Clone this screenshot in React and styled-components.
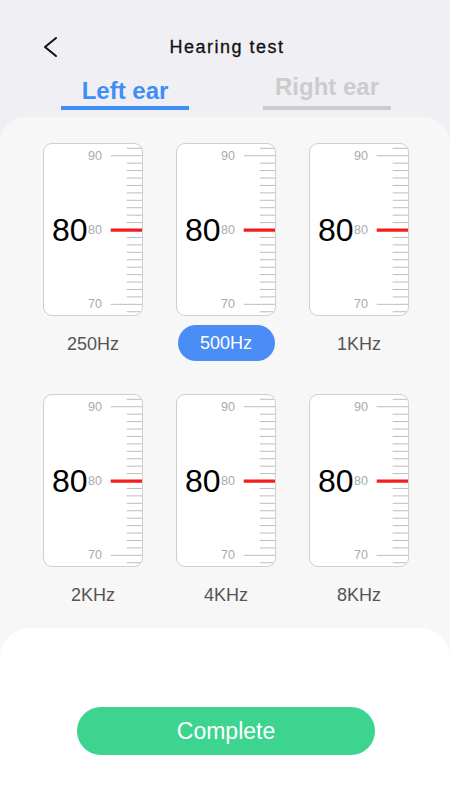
import React from "react";
import styled, { createGlobalStyle } from "styled-components";

const Global = createGlobalStyle`
  html, body { margin: 0; padding: 0; }
  body {
    font-family: "Liberation Sans", Arial, sans-serif;
    background: #f0eff4;
  }
  #root { min-height: 100vh; }
`;

const Page = styled.div`
  min-height: 100vh;
  display: flex;
  flex-direction: column;
  background: #f0eff4;
`;

const Header = styled.header`
  display: grid;
  grid-template-columns: 1fr auto 1fr;
  align-items: center;
  height: 38px;
  padding-top: 28px;
`;

const Back = styled.button`
  justify-self: start;
  margin-left: 42px;
  padding: 0;
  border: 0;
  background: none;
  display: flex;
  align-items: center;
  cursor: pointer;
`;

const Title = styled.h1`
  margin: 0;
  padding-left: 4px;
  font-size: 18px;
  line-height: 38px;
  font-weight: 400;
  letter-spacing: 1.5px;
  color: #111;
  -webkit-text-stroke: 0.3px #111;
`;

const Tabs = styled.nav`
  height: 44px;
  padding-bottom: 7px;
  display: flex;
  justify-content: center;
  align-items: flex-end;
  gap: 74px;
  padding-left: 2px;
`;

const Tab = styled.div`
  width: 128px;
  display: flex;
  flex-direction: column;
  align-items: center;
`;

const TabLabel = styled.span`
  font-size: 24px;
  line-height: 28px;
  font-weight: 700;
  color: ${(p) => (p.$active ? "#3f8ef7" : "#cccccc")};
`;

const TabLine = styled.span`
  display: block;
  width: 128px;
  height: 4px;
  margin-top: ${(p) => (p.$active ? "1px" : "5px")};
  background: ${(p) => (p.$active ? "#3f8ef7" : "#cccccc")};
`;

const Panel = styled.main`
  flex: 1;
  display: flex;
  flex-direction: column;
  background: #f7f7f7;
  border-radius: 26px 26px 0 0;
  padding-top: 26px;
`;

const Grid = styled.section`
  display: grid;
  grid-template-columns: repeat(3, 100px);
  column-gap: 33px;
  row-gap: 33px;
  justify-content: center;
  padding-left: 2px;
`;

const Cell = styled.div`
  display: flex;
  flex-direction: column;
  align-items: center;
`;

const Card = styled.div`
  position: relative;
  box-sizing: border-box;
  width: 100px;
  height: 173px;
  border: 1px solid #cfcfcf;
  border-radius: 9px;
  background: #fff;
  overflow: hidden;
  display: flex;
  align-items: center;
`;

const Scale = styled.svg`
  position: absolute;
  inset: 0;
  width: 100%;
  height: 100%;
`;

const Value = styled.span`
  position: relative;
  z-index: 1;
  padding-left: 8px;
  font-size: 32px;
  line-height: 1;
  color: #000;
`;

const Freq = styled.div`
  box-sizing: border-box;
  width: 97px;
  height: 36px;
  margin-top: 9px;
  padding-top: ${(p) => (p.$active ? "0" : "3px")};
  border-radius: 18px;
  display: flex;
  align-items: center;
  justify-content: center;
  font-size: 18px;
  background: ${(p) => (p.$active ? "#4a8df6" : "transparent")};
  color: ${(p) => (p.$active ? "#ffffff" : "#555555")};
`;

const Footer = styled.footer`
  flex: 1;
  margin-top: 16px;
  background: #ffffff;
  border-radius: 30px 30px 0 0;
  display: flex;
  justify-content: center;
  align-items: flex-start;
  padding-top: 79px;
  padding-left: 2px;
`;

const CompleteButton = styled.button`
  width: 298px;
  height: 48px;
  border: 0;
  border-radius: 24px;
  background: #3dd490;
  color: #fff;
  font-family: "Liberation Sans", Arial, sans-serif;
  font-size: 23px;
  cursor: pointer;
`;

const TICK_START = 4.3;
const TICK_STEP = 7.43;

function Gauge({ value }) {
  const ticks = Array.from({ length: 23 }, (_, i) => i);
  return (
    <Card>
      <Scale viewBox="0 0 98 171" preserveAspectRatio="none">
        {ticks.map((i) => {
          const y = TICK_START + i * TICK_STEP;
          const long = i === 1 || i === 11 || i === 21;
          if (i === 11) return null;
          return (
            <line
              key={i}
              x1={long ? 66.7 : 82.7}
              x2={98}
              y1={y}
              y2={y}
              stroke="#bdbdbd"
              strokeWidth="1"
            />
          );
        })}
        <line
          x1="66.7"
          x2="98"
          y1={TICK_START + 11 * TICK_STEP}
          y2={TICK_START + 11 * TICK_STEP}
          stroke="#f41d1d"
          strokeWidth="3.2"
        />
        {[
          ["90", 1],
          ["80", 11],
          ["70", 21],
        ].map(([t, i]) => (
          <text
            key={t}
            x="58"
            y={TICK_START + i * TICK_STEP}
            textAnchor="end"
            dominantBaseline="central"
            fontFamily="Liberation Sans, Arial, sans-serif"
            fontSize="12.5"
            fill="#aaaaaa"
          >
            {t}
          </text>
        ))}
      </Scale>
      <Value>{value}</Value>
    </Card>
  );
}

const bands = [
  { label: "250Hz", value: 80 },
  { label: "500Hz", value: 80, active: true },
  { label: "1KHz", value: 80 },
  { label: "2KHz", value: 80 },
  { label: "4KHz", value: 80 },
  { label: "8KHz", value: 80 },
];

export default function App() {
  return (
    <>
      <Global />
      <Page>
        <Header>
          <Back aria-label="Back">
            <svg width="16" height="22" viewBox="0 0 16 22">
              <polyline
                points="14,2 3,11 14,20"
                fill="none"
                stroke="#111"
                strokeWidth="2"
                strokeLinecap="round"
                strokeLinejoin="round"
              />
            </svg>
          </Back>
          <Title>Hearing test</Title>
          <span />
        </Header>
        <Tabs>
          <Tab>
            <TabLabel $active>Left ear</TabLabel>
            <TabLine $active />
          </Tab>
          <Tab>
            <TabLabel>Right ear</TabLabel>
            <TabLine />
          </Tab>
        </Tabs>
        <Panel>
          <Grid>
            {bands.map((b) => (
              <Cell key={b.label}>
                <Gauge value={b.value} />
                <Freq $active={b.active}>{b.label}</Freq>
              </Cell>
            ))}
          </Grid>
          <Footer>
            <CompleteButton>Complete</CompleteButton>
          </Footer>
        </Panel>
      </Page>
    </>
  );
}
